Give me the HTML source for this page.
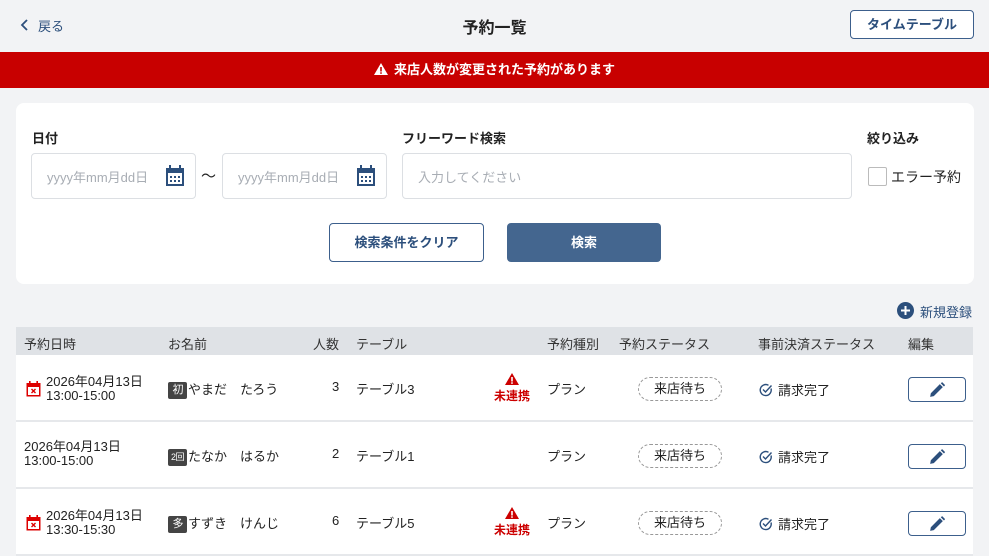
<!DOCTYPE html>
<html><head><meta charset="utf-8"><style>
*{box-sizing:border-box;margin:0;padding:0}
body{width:989px;height:556px;overflow:hidden;background:#f2f3f5;font-family:"Liberation Sans","Noto Sans CJK JP",sans-serif;color:#222;position:relative}
.a{position:absolute;white-space:nowrap}
.lbl{font-size:13px;font-weight:bold;color:#222}
.inp{position:absolute;background:#fff;border:1px solid #dcdfe3;border-radius:4px}
.ph{position:absolute;font-size:13px;color:#a8adb4;top:13px}
.th{font-size:13px;color:#333;top:334px}
.row{position:absolute;left:16px;width:957px;height:67px;background:#fff;border-bottom:2px solid #e6e8eb}
.c{position:absolute;font-size:13px;color:#222;white-space:nowrap}
.pill{position:absolute;left:622px;top:22px;width:84px;height:24px;border:1px dashed #999;border-radius:12px;font-size:13px;text-align:center;line-height:22px}
.eb{position:absolute;left:892px;top:22px;width:58px;height:25px;border:1px solid #3c5f8c;border-radius:4px}
.warn{position:absolute;left:476px;top:18px;width:40px;text-align:center;color:#c00;font-size:12px;font-weight:bold;line-height:15px}
.tag{display:inline-block;width:19px;height:17px;background:#444;color:#fff;font-size:11px;text-align:center;line-height:17px;border-radius:2px;vertical-align:1px;margin-right:1px;letter-spacing:-1px}
</style></head><body>
<svg class="a" style="left:20px;top:19px" width="10" height="12" viewBox="0 0 10 12"><path d="M7 1L2 6l5 5" fill="none" stroke="#2c4f7c" stroke-width="1.8"/></svg>
<div class="a" style="left:38px;top:16px;font-size:13px;color:#2c4f7c">戻る</div>
<div class="a" style="left:0;width:989px;text-align:center;top:14px;font-size:16px;font-weight:bold">予約一覧</div>
<div class="a" style="left:850px;top:10px;width:124px;height:29px;border:1px solid #3c5f8c;border-radius:4px;background:#fff;color:#2c4f7c;font-size:13px;font-weight:bold;text-align:center;line-height:27px">タイムテーブル</div>
<div class="a" style="left:0;top:52px;width:989px;height:36px;background:#c80000;color:#fff;font-size:13px;font-weight:bold;text-align:center;line-height:36px"><svg width="14" height="12" viewBox="0 0 14 12" style="vertical-align:-1px;margin-right:6px"><path d="M7 0L14 12H0z" fill="#fff"/><rect x="6.2" y="4" width="1.6" height="4.5" fill="#c80000"/><rect x="6.2" y="9.3" width="1.6" height="1.5" fill="#c80000"/></svg>来店人数が変更された予約があります</div>
<div class="a" style="left:16px;top:103px;width:958px;height:181px;background:#fff;border-radius:8px"></div>
<div class="a lbl" style="left:32px;top:128px">日付</div>
<div class="a lbl" style="left:402px;top:128px">フリーワード検索</div>
<div class="a lbl" style="left:867px;top:128px">絞り込み</div>
<div class="inp" style="left:31px;top:153px;width:165px;height:46px"><span class="ph" style="left:15px">yyyy年mm月dd日</span>
<svg style="position:absolute;left:133px;top:11px" width="20" height="22" viewBox="0 0 20 22"><rect x="1" y="3" width="18" height="18" fill="#2c4f7c"/><rect x="3" y="8" width="14" height="11" fill="#fff"/><rect x="4" y="0" width="2" height="5" fill="#2c4f7c"/><rect x="14" y="0" width="2" height="5" fill="#2c4f7c"/><g fill="#2c4f7c"><rect x="5" y="11" width="2" height="2"/><rect x="9" y="11" width="2" height="2"/><rect x="13" y="11" width="2" height="2"/><rect x="5" y="15" width="2" height="2"/><rect x="9" y="15" width="2" height="2"/><rect x="13" y="15" width="2" height="2"/></g></svg></div>
<div class="a" style="left:201px;top:165px;font-size:15px">～</div>
<div class="inp" style="left:222px;top:153px;width:165px;height:46px"><span class="ph" style="left:15px">yyyy年mm月dd日</span>
<svg style="position:absolute;left:133px;top:11px" width="20" height="22" viewBox="0 0 20 22"><rect x="1" y="3" width="18" height="18" fill="#2c4f7c"/><rect x="3" y="8" width="14" height="11" fill="#fff"/><rect x="4" y="0" width="2" height="5" fill="#2c4f7c"/><rect x="14" y="0" width="2" height="5" fill="#2c4f7c"/><g fill="#2c4f7c"><rect x="5" y="11" width="2" height="2"/><rect x="9" y="11" width="2" height="2"/><rect x="13" y="11" width="2" height="2"/><rect x="5" y="15" width="2" height="2"/><rect x="9" y="15" width="2" height="2"/><rect x="13" y="15" width="2" height="2"/></g></svg></div>
<div class="inp" style="left:402px;top:153px;width:450px;height:46px"><span class="ph" style="left:15px">入力してください</span></div>
<div class="a" style="left:868px;top:167px;width:19px;height:19px;border:1px solid #bbb;border-radius:2px;background:#fff"></div>
<div class="a" style="left:891px;top:167px;font-size:14px">エラー予約</div>
<div class="a" style="left:329px;top:223px;width:155px;height:39px;border:1px solid #3c5f8c;border-radius:4px;background:#fff;color:#2c4f7c;font-size:13px;font-weight:bold;text-align:center;line-height:37px">検索条件をクリア</div>
<div class="a" style="left:507px;top:223px;width:154px;height:39px;border-radius:4px;background:#44668f;color:#fff;font-size:13px;font-weight:bold;text-align:center;line-height:39px">検索</div>
<svg class="a" style="left:897px;top:302px" width="17" height="17" viewBox="0 0 17 17"><circle cx="8.5" cy="8.5" r="8.5" fill="#2c4f7c"/><path d="M8.5 4v9M4 8.5h9" stroke="#fff" stroke-width="2"/></svg>
<div class="a" style="left:920px;top:302px;font-size:13px;color:#2c4f7c">新規登録</div>
<div class="a" style="left:16px;top:327px;width:957px;height:28px;background:#dfe2e6"></div>
<div class="a th" style="left:24px">予約日時</div>
<div class="a th" style="left:168px">お名前</div>
<div class="a th" style="left:313px">人数</div>
<div class="a th" style="left:356px">テーブル</div>
<div class="a th" style="left:547px">予約種別</div>
<div class="a th" style="left:619px">予約ステータス</div>
<div class="a th" style="left:758px">事前決済ステータス</div>
<div class="a th" style="left:908px">編集</div>

<div class="row" style="top:355px">
<svg style="position:absolute;left:10px;top:26px" width="15" height="16" viewBox="0 0 15 16"><rect x="0.5" y="2" width="14" height="13.5" fill="#d00"/><rect x="2" y="6" width="11" height="8" fill="#fff"/><rect x="3" y="0" width="1.6" height="3" fill="#d00"/><rect x="10.4" y="0" width="1.6" height="3" fill="#d00"/><path d="M5.5 8l4 4M9.5 8l-4 4" stroke="#d00" stroke-width="1.4"/></svg>
<div class="c" style="left:30px;top:20px;line-height:14px">2026年04月13日<br>13:00-15:00</div>
<div class="c" style="left:152px;top:24px"><span class="tag">初</span>やまだ　たろう</div>
<div class="c" style="left:316px;top:24px">3</div>
<div class="c" style="left:340px;top:24px">テーブル3</div>
<div class="warn"><svg width="14" height="12" viewBox="0 0 14 12"><path d="M7 0L14 12H0z" fill="#c00"/><rect x="6.2" y="4" width="1.6" height="4.5" fill="#fff"/><rect x="6.2" y="9.3" width="1.6" height="1.5" fill="#fff"/></svg><br>未連携</div>
<div class="c" style="left:531px;top:24px">プラン</div>
<div class="pill">来店待ち</div>
<div class="c" style="left:743px;top:25px"><svg width="14" height="14" viewBox="0 0 14 14" style="vertical-align:-2px;margin-right:5px"><path d="M12 5.5A5.5 5.5 0 1 1 9.5 2.3" fill="none" stroke="#2c4f7c" stroke-width="1.4"/><path d="M4 6.5l2.5 2.5L12.5 2.5" fill="none" stroke="#2c4f7c" stroke-width="1.4"/></svg>請求完了</div>
<div class="eb"><svg style="position:absolute;left:20px;top:4px" width="16" height="16" viewBox="0 0 14 14"><path d="M1 13l0.6-3.2L9.5 1.9l2.6 2.6L4.2 12.4z M10.3 1.1l1.2-1 2.6 2.6-1 1.2z" fill="#2c4f7c"/></svg></div>
</div>

<div class="row" style="top:422px">
<div class="c" style="left:8px;top:18px;line-height:14px">2026年04月13日<br>13:00-15:00</div>
<div class="c" style="left:152px;top:24px"><span class="tag" style="font-size:9px;letter-spacing:-0.5px">2回</span>たなか　はるか</div>
<div class="c" style="left:316px;top:24px">2</div>
<div class="c" style="left:340px;top:24px">テーブル1</div>
<div class="c" style="left:531px;top:24px">プラン</div>
<div class="pill">来店待ち</div>
<div class="c" style="left:743px;top:25px"><svg width="14" height="14" viewBox="0 0 14 14" style="vertical-align:-2px;margin-right:5px"><path d="M12 5.5A5.5 5.5 0 1 1 9.5 2.3" fill="none" stroke="#2c4f7c" stroke-width="1.4"/><path d="M4 6.5l2.5 2.5L12.5 2.5" fill="none" stroke="#2c4f7c" stroke-width="1.4"/></svg>請求完了</div>
<div class="eb"><svg style="position:absolute;left:20px;top:4px" width="16" height="16" viewBox="0 0 14 14"><path d="M1 13l0.6-3.2L9.5 1.9l2.6 2.6L4.2 12.4z M10.3 1.1l1.2-1 2.6 2.6-1 1.2z" fill="#2c4f7c"/></svg></div>
</div>

<div class="row" style="top:489px">
<svg style="position:absolute;left:10px;top:26px" width="15" height="16" viewBox="0 0 15 16"><rect x="0.5" y="2" width="14" height="13.5" fill="#d00"/><rect x="2" y="6" width="11" height="8" fill="#fff"/><rect x="3" y="0" width="1.6" height="3" fill="#d00"/><rect x="10.4" y="0" width="1.6" height="3" fill="#d00"/><path d="M5.5 8l4 4M9.5 8l-4 4" stroke="#d00" stroke-width="1.4"/></svg>
<div class="c" style="left:30px;top:20px;line-height:14px">2026年04月13日<br>13:30-15:30</div>
<div class="c" style="left:152px;top:24px"><span class="tag">多</span>すずき　けんじ</div>
<div class="c" style="left:316px;top:24px">6</div>
<div class="c" style="left:340px;top:24px">テーブル5</div>
<div class="warn"><svg width="14" height="12" viewBox="0 0 14 12"><path d="M7 0L14 12H0z" fill="#c00"/><rect x="6.2" y="4" width="1.6" height="4.5" fill="#fff"/><rect x="6.2" y="9.3" width="1.6" height="1.5" fill="#fff"/></svg><br>未連携</div>
<div class="c" style="left:531px;top:24px">プラン</div>
<div class="pill">来店待ち</div>
<div class="c" style="left:743px;top:25px"><svg width="14" height="14" viewBox="0 0 14 14" style="vertical-align:-2px;margin-right:5px"><path d="M12 5.5A5.5 5.5 0 1 1 9.5 2.3" fill="none" stroke="#2c4f7c" stroke-width="1.4"/><path d="M4 6.5l2.5 2.5L12.5 2.5" fill="none" stroke="#2c4f7c" stroke-width="1.4"/></svg>請求完了</div>
<div class="eb"><svg style="position:absolute;left:20px;top:4px" width="16" height="16" viewBox="0 0 14 14"><path d="M1 13l0.6-3.2L9.5 1.9l2.6 2.6L4.2 12.4z M10.3 1.1l1.2-1 2.6 2.6-1 1.2z" fill="#2c4f7c"/></svg></div>
</div>
</body></html>
